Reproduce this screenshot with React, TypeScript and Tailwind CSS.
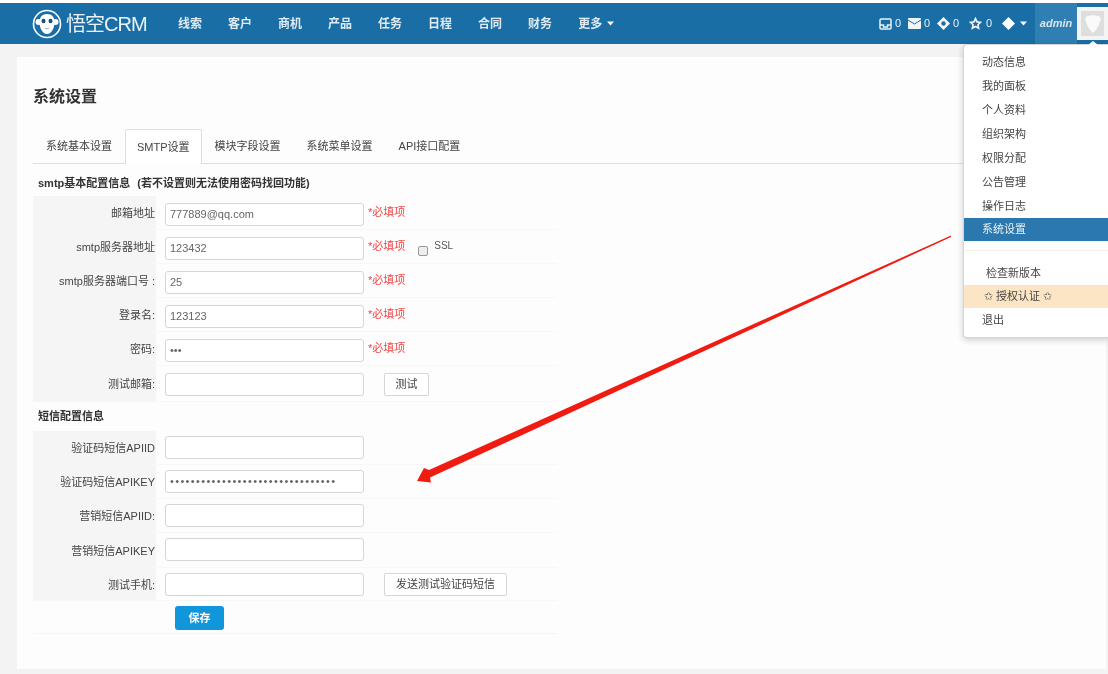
import React from 'react';

const FONT = '[font-family:"Liberation_Sans","Noto_Sans_CJK_SC",sans-serif]';

const navItems = ['线索', '客户', '商机', '产品', '任务', '日程', '合同', '财务'];
const tabs = ['系统基本设置', 'SMTP设置', '模块字段设置', '系统菜单设置', 'API接口配置'];
const menuItems = ['动态信息', '我的面板', '个人资料', '组织架构', '权限分配', '公告管理', '操作日志'];

type RowProps = {
  label: string;
  value?: string;
  required?: boolean;
  top: string;
  height: string;
  valueClass?: string;
  children?: React.ReactNode;
};

function Caret() {
  return (
    <svg width="7" height="5" viewBox="0 0 7 5" fill="#fff">
      <path d="M0 0.5h7L3.5 4.5z" />
    </svg>
  );
}

function Logo() {
  return (
    <svg width="30" height="30" viewBox="0 0 30 30">
      <circle cx="15" cy="15" r="13.5" fill="#1a6ea6" stroke="#fff" strokeWidth="1.6" />
      <circle cx="6.5" cy="13" r="3" fill="#fff" />
      <circle cx="23.5" cy="13" r="3" fill="#fff" />
      <path d="M15 5c5 0 7.5 3.5 7.5 8 0 6-3 12-7.5 12S7.500 19 7.500 13c0-4.500 2.500-8 7.500-8z" fill="#fff" />
      <ellipse cx="11.500" cy="12" rx="2" ry="2.300" fill="#1a4f7c" />
      <ellipse cx="18.500" cy="12" rx="2" ry="2.300" fill="#1a4f7c" />
      <path d="M13 19c1.200 1 2.800 1 4 0" stroke="#8fb6d2" strokeWidth="1" fill="none" />
    </svg>
  );
}

function StatusIcons() {
  return (
    <div className="flex items-center text-[11px] text-[#e6f0f6]">
      <svg width="13" height="12" viewBox="0 0 13 12" fill="none" stroke="#e8f1f7" strokeWidth="1.500">
        <rect x="1" y="1" width="11" height="10" rx="1" />
        <path d="M1 7h3.500v2h4V7H12" />
      </svg>
      <span className="ml-[3px] w-[8px]">0</span>
      <svg className="ml-[5px]" width="13" height="11" viewBox="0 0 13 11">
        <rect width="13" height="11" rx="1" fill="#f2f6f9" />
        <path d="M0 2l6.500 4L13 2" stroke="#1a6ea6" strokeWidth="1" fill="none" />
      </svg>
      <span className="ml-[3px] w-[8px]">0</span>
      <svg className="ml-[5px]" width="13" height="13" viewBox="0 0 13 13">
        <path d="M6.500 0L13 6.500 6.500 13 0 6.500z" fill="#f2f6f9" />
        <circle cx="6.500" cy="6.500" r="2.200" fill="#1a6ea6" />
      </svg>
      <span className="ml-[3px] w-[8px]">0</span>
      <svg className="ml-[8px]" width="13" height="13" viewBox="0 0 24 24" fill="none" stroke="#f2f6f9" strokeWidth="3">
        <path d="M12 3l2.800 6 6.500.8-4.800 4.400 1.300 6.400L12 17.400l-5.800 3.200 1.300-6.400L2.700 9.800 9.200 9z" />
      </svg>
      <span className="ml-[4px] w-[8px]">0</span>
      <svg className="ml-[8px]" width="13" height="13" viewBox="0 0 13 13" fill="#fff">
        <path d="M6.500 0L13 6.500 6.500 13 0 6.500z" />
      </svg>
      <span className="ml-[5px] flex">
        <Caret />
      </span>
    </div>
  );
}

function Header() {
  return (
    <div className="flex h-[41px] items-center bg-[#1a6ea6] text-white">
      <div className="ml-[32px] flex w-[146px] shrink-0 items-center gap-[4px]">
        <Logo />
        <span className="text-[20px] leading-none tracking-[-1px] text-[#eaf2f7]">悟空CRM</span>
      </div>
      <nav className="flex items-center gap-[26px] text-[12px] font-bold text-[#dfeaf2]">
        {navItems.map((item) => (
          <span key={item}>{item}</span>
        ))}
        <span className="flex items-center gap-[5px]">
          更多
          <Caret />
        </span>
      </nav>
      <div className="ml-auto flex h-full items-center">
        <StatusIcons />
        <div className="ml-[8px] flex h-full w-[42px] items-center justify-center bg-[#2f7fb2] text-[11px] font-bold italic text-[#d8e6ef]">
          admin
        </div>
        <div className="flex h-[33px] w-[31px] items-center justify-center bg-[#f4f4f4]">
          <div className="flex h-[25px] w-[23px] items-center justify-center bg-[#dedede]">
            <svg width="16" height="18" viewBox="0 0 18 20" fill="#fafafa">
              <path d="M3 1c4-1.200 8-1.200 12 0 2 .6 3 2 2.500 4C16.500 10 14 16 9 20 4 16 1.500 10 .5 5 0 3 1 1.600 3 1z" />
            </svg>
          </div>
        </div>
      </div>
    </div>
  );
}

function UserMenu() {
  return (
    <div className="absolute right-0 top-[44px] w-[145px] rounded-l-[4px] border border-r-0 border-[#d5d5d5] bg-white pb-[5px] pt-[5px] text-[11px] text-[#444] shadow-[0_2px_6px_rgba(0,0,0,0.2)]">
      <div className="absolute right-[10px] top-[-4px] h-0 w-0 border-x-[5px] border-b-[4px] border-x-transparent border-b-white" />
      {menuItems.map((item) => (
        <div key={item} className="flex h-[24px] items-center pl-[18px]">
          {item}
        </div>
      ))}
      <div className="flex h-[23px] items-center bg-[#2a78ad] pl-[18px] text-[#e8f1f7]">系统设置</div>
      <div className="mb-[10px] mt-[9px] h-px bg-[#f0f0f0]" />
      <div className="flex h-[24px] items-center pl-[22px]">检查新版本</div>
      <div className="flex h-[23px] items-center bg-[#fbe5c4] pl-[20px]">✩ 授权认证 ✩</div>
      <div className="flex h-[24px] items-center pl-[18px]">退出</div>
    </div>
  );
}

function FieldRow({ label, value, required, top, height, valueClass, children }: RowProps) {
  return (
    <div className={`flex border-b border-[#f7f7f7] ${height}`}>
      <div className="flex w-[123px] shrink-0 items-center justify-end bg-[#f5f5f5] pr-[1px] pt-[2px] text-[11px] text-[#444]">
        {label}
      </div>
      <div className={`flex flex-1 items-start pl-[9px] ${top}`}>
        <div
          className={`flex h-[23px] w-[199px] shrink-0 items-center rounded-[3px] border border-[#d6d6d6] bg-white px-[4px] text-[11px] text-[#666] ${valueClass ?? ''}`}
        >
          {value}
        </div>
        {required && <span className="ml-[4px] mt-[1px] text-[11px] leading-[16px] text-[#f04545]">*必填项</span>}
        {children}
      </div>
    </div>
  );
}

function OutlineButton({ label, width }: { label: string; width: string }) {
  return (
    <button className={`ml-[20px] h-[23px] rounded-[2px] border border-[#d6d6d6] bg-white text-[11px] text-[#444] ${width}`}>
      {label}
    </button>
  );
}

function SmtpForm() {
  return (
    <div className="w-[524px]">
      <div className="flex h-[32px] items-center pl-[5px] pt-[6px] text-[11px] font-bold text-[#333]">
        smtp基本配置信息
        <span className="ml-[7px]">(若不设置则无法使用密码找回功能)</span>
      </div>
      <FieldRow label="邮箱地址" value="777889@qq.com" required top="pt-[7px]" height="h-[34px]" />
      <FieldRow label="smtp服务器地址" value="123432" required top="pt-[7px]" height="h-[34px]">
        <span className="ml-[13px] mt-[9px] h-[10px] w-[10px] rounded-[2px] border border-[#999] bg-[#eee]" />
        <span className="ml-[6px] mt-[1px] text-[10px] leading-[16px] text-[#555]">SSL</span>
      </FieldRow>
      <FieldRow label="smtp服务器端口号 :" value="25" required top="pt-[7px]" height="h-[34px]" />
      <FieldRow label="登录名:" value="123123" required top="pt-[7px]" height="h-[34px]" />
      <FieldRow label="密码:" value="•••" required top="pt-[7px]" height="h-[34px]" />
      <FieldRow label="测试邮箱:" top="pt-[7px]" height="h-[36px]">
        <OutlineButton label="测试" width="w-[45px]" />
      </FieldRow>
      <div className="flex h-[29px] items-center pl-[5px] text-[11px] font-bold text-[#333]">短信配置信息</div>
      <FieldRow label="验证码短信APIID" top="pt-[5px]" height="h-[34px]" />
      <FieldRow
        label="验证码短信APIKEY"
        value="••••••••••••••••••••••••••••••••"
        valueClass="tracking-[1.35px] text-[#333]"
        top="pt-[5px]"
        height="h-[34px]"
      />
      <FieldRow label="营销短信APIID:" top="pt-[5px]" height="h-[34px]" />
      <FieldRow label="营销短信APIKEY" top="pt-[5px]" height="h-[35px]" />
      <FieldRow label="测试手机:" top="pt-[5px]" height="h-[33px]">
        <OutlineButton label="发送测试验证码短信" width="w-[123px]" />
      </FieldRow>
      <div className="flex h-[33px] border-b border-[#f5f5f5] pl-[142px] pt-[5px]">
        <button className="h-[24px] w-[49px] rounded-[3px] bg-[#1296db] text-[11px] font-bold text-white">保存</button>
      </div>
    </div>
  );
}

function RedArrow() {
  return (
    <svg className="pointer-events-none absolute left-0 top-0" width="1108" height="674" viewBox="0 0 1108 674">
      <polygon
        points="951,235.500 429,470 424,468 417,481 431,482.500 430,477.500 951,237"
        fill="#f01c12"
      />
    </svg>
  );
}

export default function App() {
  return (
    <div className={`relative h-[674px] w-[1108px] overflow-hidden bg-white pt-[3px] blur-[0.6px] ${FONT}`}>
      <Header />
      <div className="h-[630px] bg-[#f3f3f3] pl-[17px] pr-[2px] pt-[13px]">
        <div className="h-[612px] bg-[#fdfdfe] pl-[16px] pt-[29px]">
          <h1 className="h-[22px] text-[16px] font-bold leading-[22px] text-[#333]">系统设置</h1>
          <div className="mr-[16px] mt-[21px] flex h-[35px] border-b border-[#dedede] text-[11px] text-[#444]">
            {tabs.map((tab, index) => (
              <div
                key={tab}
                className={
                  index === 1
                    ? 'flex h-[35px] items-center rounded-t-[2px] border border-b-0 border-[#dedede] bg-white px-[11px]'
                    : 'flex h-[34px] items-center px-[13px]'
                }
              >
                {tab}
              </div>
            ))}
          </div>
          <SmtpForm />
        </div>
      </div>
      <UserMenu />
      <RedArrow />
    </div>
  );
}
